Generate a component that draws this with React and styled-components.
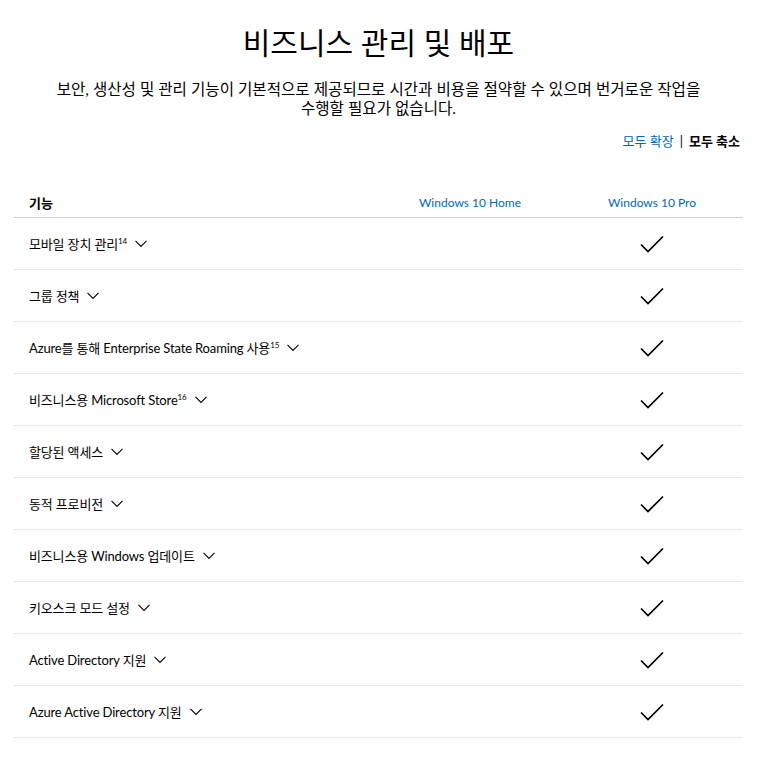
import React from "react";
import styled, { createGlobalStyle } from "styled-components";

const GlobalStyle = createGlobalStyle`
  body {
    margin: 0;
    background: #fff;
    color: #000;
    font-family: Lato, "Noto Sans CJK KR", sans-serif;
  }
`;

const Page = styled.div`
  width: 765px;
  padding: 24px 22px 0 14px;
  box-sizing: border-box;
`;

const Title = styled.h1`
  margin: 0;
  text-align: center;
  font-size: 30px;
  font-weight: 400;
  line-height: 36px;
`;

const Lead = styled.p`
  margin: 20px auto 0;
  width: 710px;
  text-align: center;
  font-size: 15.6px;
  line-height: 19px;
`;

const Toggles = styled.div`
  display: flex;
  justify-content: flex-end;
  align-items: center;
  gap: 6px;
  margin-top: 14px;
  padding-right: 3px;
  font-size: 13px;
  line-height: 18px;
`;

const ToggleLink = styled.span`
  color: ${(p) => (p.$active ? "#000" : "#0067b8")};
  font-weight: ${(p) => (p.$active ? 700 : 400)};
`;

const Table = styled.div`
  margin-top: 34px;
  width: 729px;
`;

const Row = styled.div`
  display: grid;
  grid-template-columns: 365px 182px 182px;
  align-items: center;
  height: ${(p) => (p.$head ? "33px" : "51px")};
  border-bottom: 1px solid ${(p) => (p.$head ? "#cfcfcf" : "#e6e6e6")};
`;

const HeadCell = styled.div`
  font-size: 13px;
  font-weight: 700;
  padding-left: 15px;
  padding-top: 3px;
`;

const PlanCell = styled.div`
  text-align: center;
  font-size: 12px;
  color: #0067b8;
  padding-top: 3px;
`;

const Feature = styled.div`
  display: flex;
  align-items: center;
  padding-left: 15px;
  font-size: 13px;
  line-height: 18px;
  letter-spacing: -0.15px;
`;

const Sup = styled.sup`
  font-size: 8px;
  line-height: 0;
  vertical-align: 5px;
`;

const Chevron = styled.svg`
  width: 12px;
  height: 8px;
  margin-left: 8px;
  flex: none;
`;

const CheckCell = styled.div`
  display: flex;
  justify-content: center;
`;

const Check = () => (
  <svg width="24" height="18" viewBox="0 0 24 18" fill="none">
    <path d="M1 9.5 L8 16.5 L23 1.5" stroke="#000" strokeWidth="1.7" />
  </svg>
);

const features = [
  { name: "모바일 장치 관리", sup: "14" },
  { name: "그룹 정책" },
  { name: "Azure를 통해 Enterprise State Roaming 사용", sup: "15" },
  { name: "비즈니스용 Microsoft Store", sup: "16" },
  { name: "할당된 액세스" },
  { name: "동적 프로비전" },
  { name: "비즈니스용 Windows 업데이트" },
  { name: "키오스크 모드 설정" },
  { name: "Active Directory 지원" },
  { name: "Azure Active Directory 지원" },
];

export default function App() {
  return (
    <Page>
      <GlobalStyle />
      <Title>비즈니스 관리 및 배포</Title>
      <Lead>
        보안, 생산성 및 관리 기능이 기본적으로 제공되므로 시간과 비용을 절약할 수 있으며 번거로운 작업을
        <br />
        수행할 필요가 없습니다.
      </Lead>
      <Toggles>
        <ToggleLink>모두 확장</ToggleLink>
        <span>|</span>
        <ToggleLink $active>모두 축소</ToggleLink>
      </Toggles>
      <Table>
        <Row $head>
          <HeadCell>기능</HeadCell>
          <PlanCell>Windows 10 Home</PlanCell>
          <PlanCell>Windows 10 Pro</PlanCell>
        </Row>
        {features.map((f) => (
          <Row key={f.name}>
            <Feature>
              <span>
                {f.name}
                {f.sup && <Sup>{f.sup}</Sup>}
              </span>
              <Chevron viewBox="0 0 12 8">
                <path d="M0.5 0.8 L6 6.5 L11.5 0.8" stroke="#000" strokeWidth="1.1" fill="none" />
              </Chevron>
            </Feature>
            <div />
            <CheckCell>
              <Check />
            </CheckCell>
          </Row>
        ))}
      </Table>
    </Page>
  );
}
